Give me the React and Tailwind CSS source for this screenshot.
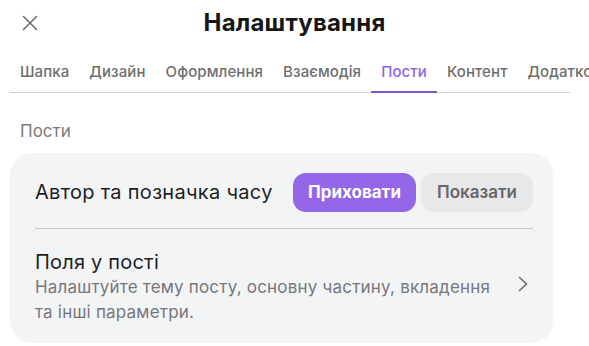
import React from "react";

const tabs = ["Шапка", "Дизайн", "Оформлення", "Взаємодія", "Пости", "Контент", "Додаткові"];

export default function App() {
  return (
    <div className="w-[589px] h-[346px] overflow-hidden bg-white" style={{ fontFamily: "Inter, 'Noto Sans', sans-serif" }}>
      <div className="relative h-[46px] flex items-center justify-center">
        <svg className="absolute left-[22px] top-[15px]" width="16" height="16" viewBox="0 0 16 16" fill="none" stroke="#6b6b6b" strokeWidth="1.6" strokeLinecap="round">
          <path d="M1.5 1.5L14.5 14.5M14.5 1.5L1.5 14.5" />
        </svg>
        <div className="text-[24px] font-bold text-[#161616] tracking-[0.2px] leading-[30px]">Налаштування</div>
      </div>
      <div className="ml-[10px] w-[560px] h-[47px] border-b border-[#cfcfd2] flex">
        {tabs.map((t) => (
          <div
            key={t}
            className={
              "shrink-0 px-[10px] pt-[15px] text-[15px] font-medium whitespace-nowrap tracking-[0.1px] " +
              (t === "Пости" ? "text-[#9363e6] border-b-2 border-[#7d57d8] -mb-px" : "text-[#6e6e6e]")
            }
          >
            {t}
          </div>
        ))}
      </div>
      <div className="pl-[20px] pt-[28px] text-[17px] text-[#7a7a7a] leading-[20px]">Пости</div>
      <div className="ml-[10px] mt-[12px] w-[543px] h-[190px] rounded-[22px] bg-[#f3f4f6] pl-[25px] pr-[20px]">
        <div className="h-[76px] flex items-center justify-between border-b border-[#c7c7ca]">
          <div className="text-[20px] text-[#1f1f1f] tracking-[0.3px] pt-[3px]">Автор та позначка часу</div>
          <div className="flex gap-[5px] pt-[4px]">
            <div className="h-[39px] w-[123px] rounded-[13px] bg-[#9466e8] text-white text-[17px] font-bold flex items-center justify-center">Приховати</div>
            <div className="h-[39px] w-[112px] rounded-[13px] bg-[#e8e8eb] text-[#676767] text-[17px] font-semibold flex items-center justify-center">Показати</div>
          </div>
        </div>
        <div className="flex items-center justify-between pt-[20px]">
          <div>
            <div className="text-[20px] text-[#1f1f1f] leading-[26px] tracking-[0.2px]">Поля у пості</div>
            <div className="text-[17px] text-[#77777a] leading-[25px] w-[458px] tracking-[0.2px]">
              Налаштуйте тему посту, основну частину, вкладення та інші параметри.
            </div>
          </div>
          <svg className="mr-[5px] mb-[6px]" width="10" height="16" viewBox="0 0 10 16" fill="none" stroke="#6b6b6b" strokeWidth="1.6" strokeLinecap="round" strokeLinejoin="round">
            <path d="M1.5 1.5L8.5 8L1.5 14.5" />
          </svg>
        </div>
      </div>
    </div>
  );
}
